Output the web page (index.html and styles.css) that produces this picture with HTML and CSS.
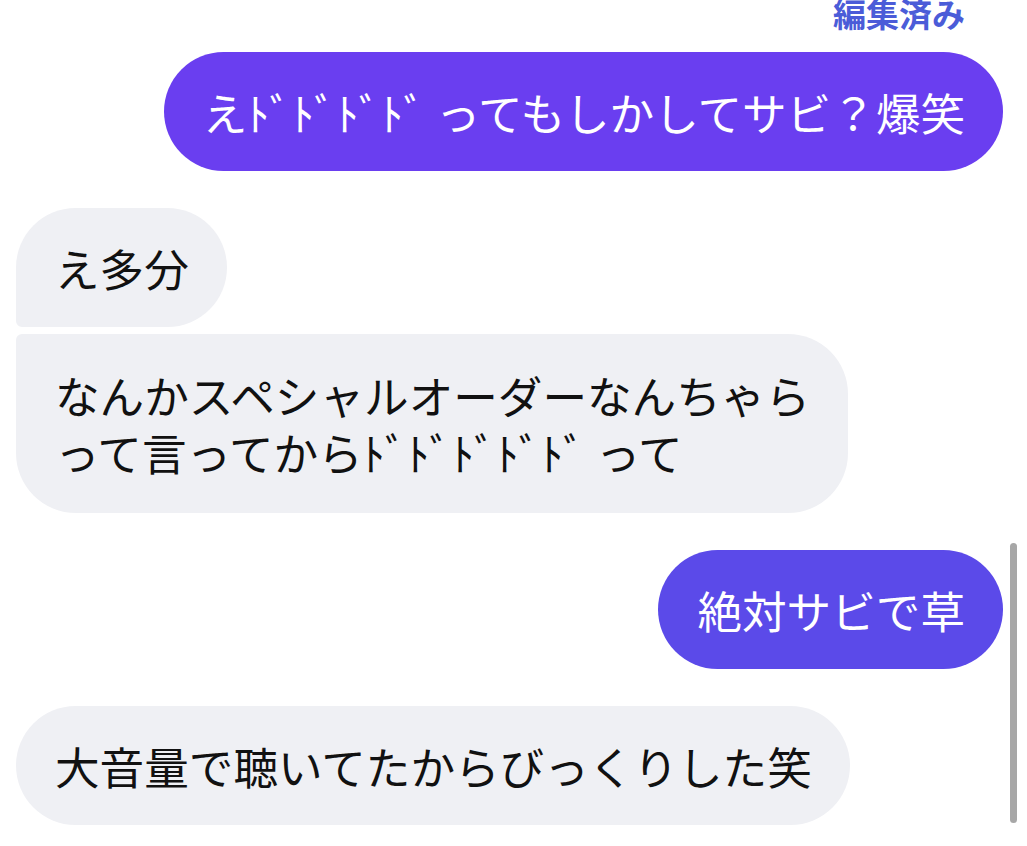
FILE: index.html
```html
<!DOCTYPE html>
<html lang="ja">
  <head>
    <meta charset="UTF-8" />
    <meta name="viewport" content="width=device-width, initial-scale=1.0" />
    <title>Chat</title>
    <link rel="stylesheet" href="styles.css">
  </head>
  <body>
    <div class="chat">
      <div class="edited">編集済み</div>
      <div class="bubble mine first-mine">えﾄﾞﾄﾞﾄﾞﾄﾞ ってもしかしてサビ？爆笑</div>

      <div class="bubble theirs group-top">え多分</div>
      <div class="bubble theirs group-bottom">なんかスペシャルオーダーなんちゃら<br>って言ってからﾄﾞﾄﾞﾄﾞﾄﾞﾄﾞ って</div>

      <div class="bubble mine second-mine">絶対サビで草</div>

      <div class="bubble theirs">大音量で聴いてたからびっくりした笑</div>
    </div>
    <div class="scrollbar"></div>
  </body>
</html>
```

FILE: styles.css
```css
body {
  margin: 0;
  background: #fff;
  font-family: "Noto Sans CJK JP", "Noto Sans", sans-serif;
  overflow: hidden;
}

.chat {
  display: flex;
  flex-direction: column;
  padding: 0 24px 0 16px;
}

/* label above the first sent message, cut off at the top */
.edited {
  align-self: flex-end;
  margin-top: -4px;
  margin-right: 38px;
  font-size: 33px;
  line-height: 34px;
  font-weight: bold;
  color: #4b5cd8;
}

.bubble {
  font-size: 44.6px;
  line-height: 57px;
  padding: 31px 38px 31px 39px;
  border-radius: 60px;
  white-space: nowrap;
}

.mine {
  align-self: flex-end;
  color: #fff;
  margin-top: 37px;
}

.first-mine {
  margin-top: 22px;
  background: #6a3ef0;
}

.second-mine {
  background: #5b4ae9;
}

.theirs {
  align-self: flex-start;
  background: #eff0f4;
  color: #111;
  margin-top: 37px;
}

.group-top {
  border-bottom-left-radius: 6px;
}

.group-bottom {
  margin-top: 7px;
  border-top-left-radius: 6px;
  padding-top: 32px;
  padding-bottom: 33px;
}

/* overlay scrollbar */
.scrollbar {
  position: absolute;
  left: 1010px;
  top: 543px;
  width: 7px;
  height: 280px;
  border-radius: 4px;
  background: #a7a7a7;
}
```
